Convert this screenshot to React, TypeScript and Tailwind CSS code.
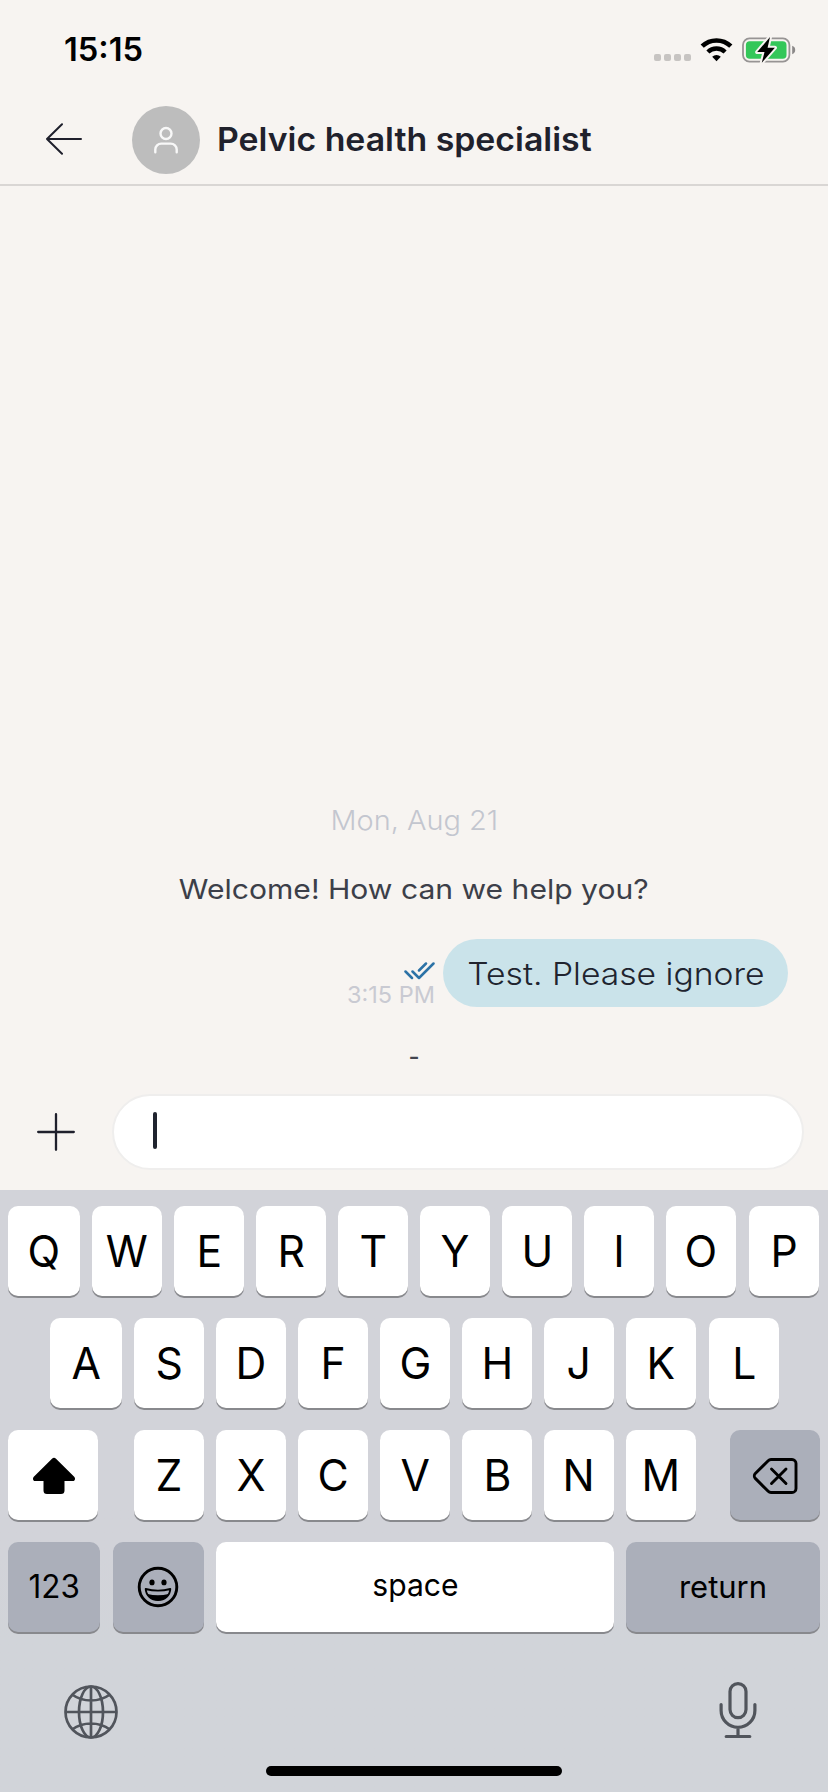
import type { ReactNode } from 'react';

const TOP_ROW = ['W', 'E', 'R', 'T', 'Y', 'U', 'I', 'O'];
const HOME_ROW = ['S', 'D', 'F', 'G', 'H', 'J', 'K'];
const BOTTOM_ROW = ['Z', 'X', 'C', 'V', 'B', 'N', 'M'];

function Key({ children, className = '' }: { children: ReactNode; className?: string }) {
  return (
    <button
      type="button"
      className={`flex h-[90px] shrink-0 items-center justify-center rounded-[10px] text-black shadow-[0_2px_0_#88898d] ${className}`}
    >
      {children}
    </button>
  );
}

function Letter({ value, className = 'w-[70px]' }: { value: string; className?: string }) {
  return (
    <Key className={`bg-white text-[44px] leading-none ${className}`}>
      <span className="scale-x-[0.97]">{value}</span>
    </Key>
  );
}

function StatusBar() {
  return (
    <div className="flex h-24 items-center justify-between pt-1 pr-8 pl-16">
      <span className="origin-left scale-x-[1.02] text-[32px] leading-10 font-semibold text-black">15:15</span>
      <div className="flex items-center">
        <div className="mr-[9px] flex gap-[3px] pt-[15px]">
          <i className="size-[7px] rounded-[2px] bg-[#c7c4c2]" />
          <i className="size-[7px] rounded-[2px] bg-[#c7c4c2]" />
          <i className="size-[7px] rounded-[2px] bg-[#c7c4c2]" />
          <i className="size-[7px] rounded-[2px] bg-[#c7c4c2]" />
        </div>
        <svg className="mr-[9px]" width="33" height="26" viewBox="0 0 33 26" fill="none" stroke="#000">
          <path d="M2.2 9.2a20.6 20.6 0 0 1 28.6 0" strokeWidth="4.6" />
          <path d="M7.9 15a12.4 12.4 0 0 1 17.2 0" strokeWidth="4.4" />
          <path d="M12.2 19.7a6.2 6.2 0 0 1 8.6 0L16.5 24.3z" fill="#000" stroke="none" />
        </svg>
        <svg width="54" height="30" viewBox="0 0 54 30">
          <rect x="1" y="3.4" width="46.4" height="23.2" rx="6.5" fill="none" stroke="#979494" strokeWidth="1.8" />
          <rect x="3.9" y="6.3" width="40.6" height="17.4" rx="3.8" fill="#34c759" />
          <path d="M50.2 10.800c2 .7 3 2.200 3 4.200s-1 3.500-3 4.200z" fill="#8b8888" />
          <path
            d="M28 2 15.200 17.100h7.300L19.800 27.800 32.900 12.800h-7.300z"
            fill="#000"
            stroke="#f7f4f1"
            strokeWidth="4"
            strokeLinejoin="round"
            paintOrder="stroke"
          />
        </svg>
      </div>
    </div>
  );
}

function Header() {
  return (
    <header className="flex h-[90px] items-center border-b-2 border-[#d9d6d4] pl-[45px]">
      <svg width="38" height="34" viewBox="0 0 38 34" fill="none" stroke="#1f202c" strokeWidth="2" strokeLinecap="round" strokeLinejoin="round">
        <path d="M36 16H2M17 1.200 2 16l15 14.800" />
      </svg>
      <div className="ml-[49px] flex size-[68px] items-center justify-center rounded-full bg-[#bdbdbd]">
        <svg width="26" height="28" viewBox="0 0 26 28" fill="none" stroke="#f8f8f8" strokeWidth="2.400" strokeLinecap="round">
          <circle cx="13" cy="7.500" r="5.500" />
          <path d="M2.300 26.200v-2.600a6 6 0 0 1 6-6h9.400a6 6 0 0 1 6 6v2.600" />
        </svg>
      </div>
      <h1 className="ml-[17px] origin-left scale-x-[1.057] text-[32px] leading-10 font-semibold whitespace-nowrap text-[#20212c]">
        Pelvic health specialist
      </h1>
    </header>
  );
}

function Conversation() {
  return (
    <main className="flex flex-1 flex-col justify-end">
      <p className="self-center scale-x-[1.07] text-[27px] leading-10 font-light text-[#c3c6cf]">Mon, Aug 21</p>
      <p className="mt-7 self-center scale-x-[1.094] text-[27.500px] leading-10 font-normal text-[#3c3f49]">
        Welcome! How can we help you?
      </p>
      <div className="mt-[30px] mr-10 flex justify-end">
        <div className="mr-2 flex flex-col items-end pt-[22px]">
          <svg width="32" height="20" viewBox="0 0 32 20" fill="none" stroke="#2c72a6" strokeWidth="2.500" strokeLinecap="round" strokeLinejoin="round">
            <path d="m2.500 10.500 6.500 6.500M9.500 10.500l6.500 6.500L30.500 2.500M16 9.500l7-7" />
          </svg>
          <span className="mt-px text-[23.500px] leading-[26px] text-[#c9cad2]">3:15 PM</span>
        </div>
        <div className="flex h-[68px] w-[345px] items-center justify-center rounded-full bg-[#cae3ea]">
          <span className="mt-0.5 scale-x-[1.085] text-[31px] leading-10 font-light whitespace-nowrap text-[#20242f]">
            Test. Please ignore
          </span>
        </div>
      </div>
      <p className="mt-[29px] mb-[17px] self-center text-[24px] leading-10 font-medium text-[#42454f]">-</p>
    </main>
  );
}

function Composer() {
  return (
    <div className="flex h-24 items-start pr-6 pl-9">
      <svg className="mt-[18px]" width="40" height="40" viewBox="0 0 40 40" stroke="#1f202c" strokeWidth="2.300" strokeLinecap="round">
        <path d="M20 2.200v35.600M2.200 20h35.600" />
      </svg>
      <div className="ml-9 flex h-[76px] flex-1 items-center rounded-full border-2 border-[#efeeed] bg-white pl-[39px]">
        <span className="mb-[3px] h-[37px] w-1 rounded-full bg-[#20242f]" />
      </div>
    </div>
  );
}

function Keyboard() {
  return (
    <section className="flex h-[602px] flex-col bg-linear-to-b from-[#d2d3d9] from-60% to-[#d1d4d9] to-75% pt-4">
      <div className="flex gap-3 pl-2">
        <Letter value="Q" className="w-[72px]" />
        {TOP_ROW.map((k) => (
          <Letter key={k} value={k} />
        ))}
        <Letter value="P" className="ml-px w-[70px]" />
      </div>
      <div className="mt-[22px] flex gap-3 pl-[50px]">
        <Letter value="A" className="w-[72px]" />
        {HOME_ROW.map((k) => (
          <Letter key={k} value={k} />
        ))}
        <Letter value="L" className="ml-px w-[70px]" />
      </div>
      <div className="mt-[22px] flex pl-2">
        <Key className="w-[90px] bg-white">
          <svg width="44" height="38" viewBox="0 0 44 38" className="mt-px ml-px">
            <path
              d="M20 1.800a2.800 2.800 0 0 1 4 0L42.200 19.700c1.600 1.700.7 4.300-1.500 4.300H32.500v9.500a3.500 3.500 0 0 1-3.500 3.500H15a3.500 3.500 0 0 1-3.500-3.500V24H3.300C1.100 24 .2 21.400 1.800 19.700z"
              fill="#000"
            />
          </svg>
        </Key>
        <div className="ml-9 flex gap-3">
          {BOTTOM_ROW.map((k) => (
            <Letter key={k} value={k} />
          ))}
        </div>
        <Key className="ml-[34px] w-[90px] bg-[#abafba]">
          <svg width="46" height="38" viewBox="0 0 46 38" fill="none" stroke="#000" strokeWidth="2.900" strokeLinecap="round" strokeLinejoin="round" className="mt-px">
            <path d="M19 2.500h21a4 4 0 0 1 4 4v25a4 4 0 0 1-4 4H19a4 4 0 0 1-2.800-1.200L3.300 21.400a3.400 3.400 0 0 1 0-4.800L16.200 3.700A4 4 0 0 1 19 2.500z" />
            <path d="M19.500 12 34 26.500M34 12 19.500 26.500" />
          </svg>
        </Key>
      </div>
      <div className="mt-[22px] flex pl-2">
        <Key className="w-[92px] bg-[#abafba] text-[32px]">
          <span className="scale-x-[0.98]">123</span>
        </Key>
        <Key className="ml-[13px] w-[91px] bg-[#abafba]">
          <svg width="42" height="42" viewBox="0 0 42 42" fill="none" stroke="#000" className="mr-px">
            <circle cx="21" cy="21" r="18.800" strokeWidth="2.900" />
            <ellipse cx="15" cy="16.400" rx="2.600" ry="2.900" fill="#000" stroke="none" />
            <ellipse cx="27" cy="16.400" rx="2.600" ry="2.900" fill="#000" stroke="none" />
            <path d="M8.700 23q12.300 3.200 24.600 0c-.3 6.500-5.700 11-12.300 11S9 29.500 8.700 23z" strokeWidth="1.900" strokeLinejoin="round" />
            <path d="M10.300 28q10.700 2.600 21.400 0c-1.600 4-5.600 6.300-10.700 6.300s-9.100-2.300-10.700-6.300z" fill="#000" stroke="none" />
          </svg>
        </Key>
        <Key className="ml-3 w-[398px] bg-white pb-1 text-[31px]">
          <span className="scale-x-[0.97]">space</span>
        </Key>
        <Key className="ml-3 w-[194px] bg-[#abafba] text-[31px]">return</Key>
      </div>
      <div className="flex h-[134px] items-center justify-between pt-6 pr-[70px] pl-[63px]">
        <svg className="mt-0.5" width="56" height="56" viewBox="0 0 56 56" fill="none" stroke="#51555c" strokeWidth="2.700">
          <circle cx="28" cy="28" r="25.500" />
          <ellipse cx="28" cy="28" rx="12" ry="25.500" />
          <path d="M28 2.500v51M2.500 28h51M9 10.500q8.500 6 19 6t19-6M9 45.500q8.500-6 19-6t19 6" />
        </svg>
        <svg className="mb-0.5" width="40" height="58" viewBox="0 0 40 58" fill="none" stroke="#51555c" strokeWidth="3.200" strokeLinecap="round">
          <rect x="12" y="2.600" width="16" height="34" rx="8" />
          <path d="M3.100 23.500v6a16.900 16.900 0 0 0 33.800 0v-6M20 46.500v9M8.200 55.500h23.600" />
        </svg>
      </div>
      <div className="mx-auto h-[10px] w-[296px] rounded-full bg-black" />
    </section>
  );
}

export default function App() {
  return (
    <div className="flex h-[1792px] w-[828px] flex-col overflow-hidden bg-[#f7f4f1] font-[Inter,sans-serif]">
      <StatusBar />
      <Header />
      <Conversation />
      <Composer />
      <Keyboard />
    </div>
  );
}
